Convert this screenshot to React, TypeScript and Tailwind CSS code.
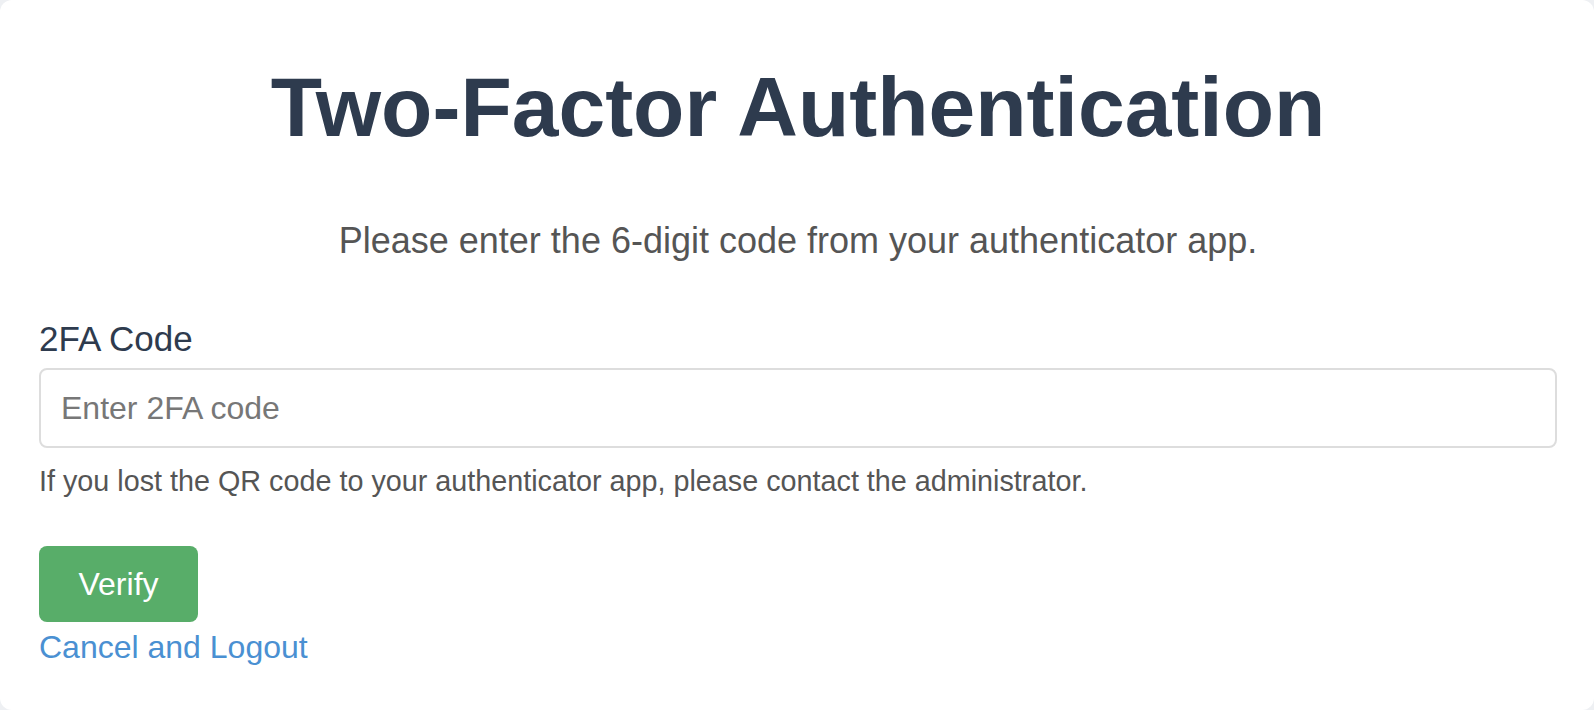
import { FC } from 'react';

const App: FC = () => {
  return (
    <div className="min-h-[710px] w-full bg-[#eef0f3] font-['Liberation_Sans',Arial,sans-serif]">
      <div className="min-h-[710px] w-full rounded-xl bg-white pl-[39px] pr-[37px] pt-[65px] pb-10">
        <h1 className="text-center text-[84px] font-bold leading-none text-[#2e3b4e]">
          Two-Factor Authentication
        </h1>
        <p className="mt-[74px] text-center text-[36px] leading-none text-[#555555]">
          Please enter the 6-digit code from your authenticator app.
        </p>

        <form className="mt-[62px] flex flex-col">
          <label htmlFor="code" className="text-[35px] leading-none text-[#2e3b4e]">
            2FA Code
          </label>
          <input
            id="code"
            type="text"
            placeholder="Enter 2FA code"
            className="mt-[12px] h-[80px] w-full rounded-lg border-2 border-[#dddddd] bg-white px-[20px] text-[32px] text-[#333333] outline-none placeholder:text-[#777777]"
          />
          <p className="mt-[19px] text-[28.75px] leading-none text-[#555555]">
            If you lost the QR code to your authenticator app, please contact the administrator.
          </p>
          <div className="mt-[50px]">
            <button
              type="button"
              className="h-[76px] w-[159px] rounded-lg bg-[#58ad69] text-[32px] text-white"
            >
              Verify
            </button>
          </div>
          <a href="#" className="mt-[9px] self-start text-[32px] leading-none text-[#4a90d2]">
            Cancel and Logout
          </a>
        </form>
      </div>
    </div>
  );
};

export default App;
